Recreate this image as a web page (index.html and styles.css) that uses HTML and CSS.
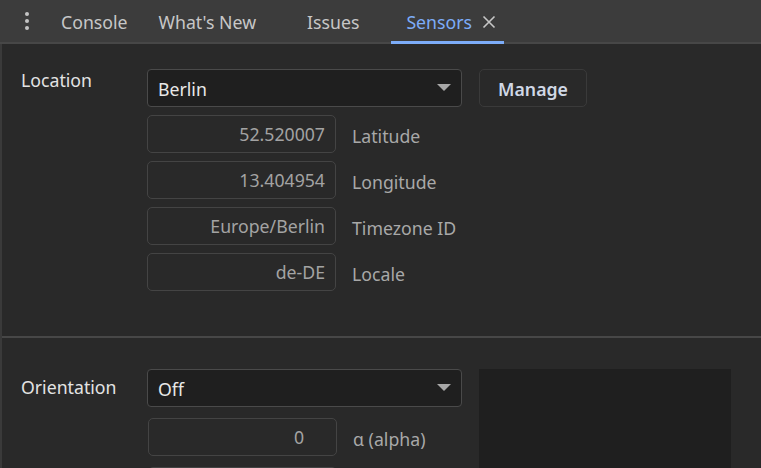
FILE: index.html
```html
<!DOCTYPE html>
<html>
<head>
<meta charset="utf-8">
<link rel="stylesheet" href="styles.css">
</head>
<body>
<div class="tabbar">
  <div class="menu"><span></span><span></span><span></span></div>
  <div class="tab t-console">Console</div>
  <div class="tab t-new">What's New</div>
  <div class="tab t-issues">Issues</div>
  <div class="tab active">Sensors<svg class="close" width="14" height="14" viewBox="0 0 14 14"><path d="M1.5 1.5 L12.5 12.5 M12.5 1.5 L1.5 12.5" stroke="#c7c7c7" stroke-width="1.6" fill="none"/></svg></div>
</div>
<div class="panel">
  <section class="sec loc">
    <div class="label">Location</div>
    <div class="body">
      <div class="toprow">
        <div class="select"><span>Berlin</span><i class="arrow"></i></div>
        <div class="btn">Manage</div>
      </div>
      <div class="field"><div class="input">52.520007</div><div class="flabel">Latitude</div></div>
      <div class="field"><div class="input">13.404954</div><div class="flabel">Longitude</div></div>
      <div class="field"><div class="input">Europe/Berlin</div><div class="flabel">Timezone ID</div></div>
      <div class="field"><div class="input">de-DE</div><div class="flabel">Locale</div></div>
    </div>
  </section>
  <section class="sec ori">
    <div class="label">Orientation</div>
    <div class="body">
      <div class="toprow">
        <div class="col">
          <div class="select"><span>Off</span><i class="arrow"></i></div>
          <div class="field num"><div class="input">0</div><div class="flabel">α (alpha)</div></div>
          <div class="field num"><div class="input"></div><div class="flabel"></div></div>
        </div>
        <div class="canvas"></div>
      </div>
    </div>
  </section>
</div>
</body>
</html>
```
FILE: styles.css
```css
* { box-sizing: border-box; }
html, body { margin: 0; padding: 0; }
body {
  width: 761px; height: 468px; overflow: hidden;
  background: #292929;
  font-family: "Noto Sans", "Open Sans", sans-serif;
  font-size: 17.7px;
  color: #e3e3e3;
}
.tabbar {
  height: 44px;
  background: #3c3c3c;
  border-bottom: 2px solid #474747;
  display: flex;
  align-items: stretch;
}
.menu {
  width: 54px;
  display: flex; flex-direction: column; align-items: center; justify-content: center;
  gap: 3px;
  padding-right: 1px;
}
.menu span { width: 4px; height: 4px; border-radius: 50%; background: #c4c4c4; }
.tab {
  display: flex; align-items: center;
  padding: 4px 0 0 0;
  color: #c7c7c7;
  margin-bottom: -2px;
  border-bottom: 3px solid transparent;
  line-height: 1;
}
.t-console { margin-left: 7px; }
.t-new { margin-left: 31px; }
.t-issues { margin-left: 51px; }
.tab.active {
  margin-left: 32px;
  padding-left: 15px; padding-right: 8px;
  color: #7cacf8;
  border-bottom-color: #7cacf8;
}
.close { margin-left: 10px; margin-top: -2px; }
.panel {
  border-left: 2px solid #3a3a3a;
  height: 424px;
}
.sec { display: flex; }
.loc { padding: 25px 0 0 19px; height: 294px; border-bottom: 2px solid #474747; }
.ori { padding: 31px 0 0 19px; }
.label { width: 126px; line-height: 1; padding-top: 3px; }
.ori .label { padding-top: 10px; }
.body { display: flex; flex-direction: column; }
.toprow { display: flex; gap: 17px; }
.col { display: flex; flex-direction: column; }
.select {
  width: 315px; height: 38px;
  background: #1f1f1f;
  border: 1px solid #4a4a4a;
  border-radius: 4px;
  display: flex; align-items: center; justify-content: space-between;
  padding: 2px 10px 0 10px;
  color: #e8e8e8;
}
.arrow {
  width: 0; height: 0;
  border-left: 7px solid transparent; border-right: 7px solid transparent;
  border-top: 7px solid #a8a8a8;
  margin-bottom: 3px;
}
.btn {
  width: 108px; height: 38px;
  border: 1px solid #3a3a3a;
  border-radius: 5px;
  display: flex; align-items: center; justify-content: center;
  font-weight: 600;
  color: #d0d8e6;
  padding-top: 1px;
}
.field { display: flex; align-items: center; margin-top: 8px; }
.input {
  width: 189px; height: 38px;
  border: 1px solid #444;
  border-radius: 5px;
  display: flex; align-items: center; justify-content: flex-end;
  padding: 0 10px 1px 10px;
  color: #a3a3a3;
}
.flabel { margin-left: 16px; color: #a8a8a8; padding-top: 4px; }
.num { margin-top: 11px; margin-left: 1px; }
.num .input { padding-right: 32px; }
.canvas { width: 252px; height: 120px; background: #1f1f1f; }
```
